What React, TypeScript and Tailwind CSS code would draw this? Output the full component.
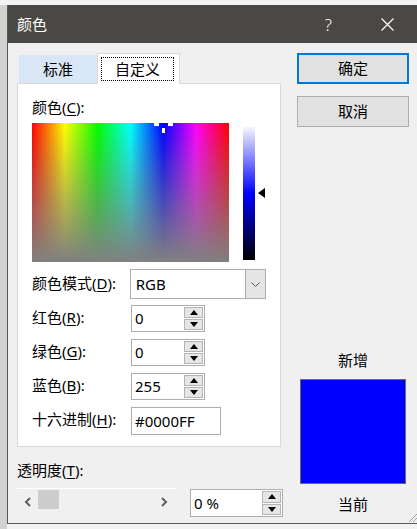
import { FC } from "react"

const SpinButtons: FC = () => (
  <div className="flex w-[20px] flex-col gap-px py-px pr-px">
    <div className="flex h-[12px] items-center justify-center border border-[#b4b4b4] bg-[#e6e6e6]">
      <svg width="8" height="5" viewBox="0 0 8 5">
        <polygon points="0,5 8,5 4,0" fill="#000" />
      </svg>
    </div>
    <div className="flex h-[12px] items-center justify-center border border-[#b4b4b4] bg-[#e6e6e6]">
      <svg width="8" height="5" viewBox="0 0 8 5">
        <polygon points="0,0 8,0 4,5" fill="#000" />
      </svg>
    </div>
  </div>
)

const SpinBox: FC<{ value: string; className: string }> = ({ value, className }) => (
  <div className={`flex border border-[#adadad] bg-white ${className}`}>
    <div className="flex grow items-center pl-[3px] text-[15px] leading-none">{value}</div>
    <SpinButtons />
  </div>
)

const Label: FC<{ text: string; hotkey: string }> = ({ text, hotkey }) => (
  <span className="text-[15px] leading-[20px]">
    {text}(<span className="underline underline-offset-2">{hotkey}</span>):
  </span>
)

export default function App() {
  return (
    <div className="h-[529px] w-[417px] overflow-hidden bg-[#f3f3f3] font-['Noto_Sans','Noto_Sans_CJK_SC',sans-serif] text-black">
      <div className="flex h-full">
        {/* desktop strip on the left */}
        <div className="mt-[5px] w-[7px] shrink-0 bg-[#d2d2d2]" />

        {/* dialog window */}
        <div className="relative mt-[5px] flex h-[519px] w-[412px] shrink-0 flex-col border-b border-l border-[#5a5a5a] bg-[#f0f0f0]">
          {/* Title bar */}
          <div className="flex h-[38px] shrink-0 items-center bg-[#4a4845] pl-[9px] text-white">
            <span className="text-[15px] leading-none">颜色</span>
            <span className="ml-auto mr-[49px] text-[17px] font-light leading-none">?</span>
            <svg width="13" height="13" viewBox="0 0 13 13" className="mr-[25px]">
              <path d="M0.5 0.5 L12.5 12.5 M12.5 0.5 L0.5 12.5" stroke="#fff" strokeWidth="1.2" />
            </svg>
          </div>

          {/* Body */}
          <div className="flex pl-[9px] pt-[10px]">
            {/* Left column */}
            <div className="flex w-[266px] flex-col">
              {/* Tabs */}
              <div className="relative z-10 -mb-px flex h-[31px] items-end pl-[2px]">
                <div className="mb-px flex h-[28px] w-[78px] items-center justify-center bg-[#d8e6f5] text-[15px]">
                  标准
                </div>
                <div className="flex h-[31px] w-[83px] border-l border-r border-t border-[#d9d9d9] bg-white pb-[3px] pl-[3px] pr-[5px] pt-[3px]">
                  <div className="flex grow items-center justify-center border border-dotted border-black text-[15px]">
                    自定义
                  </div>
                </div>
              </div>

              {/* Panel */}
              <div className="flex h-[364px] w-[264px] flex-col border border-[#d9d9d9] bg-white px-[14px] pt-[13px]">
                <Label text="颜色" hotkey="C" />

                <div className="mt-[6px] flex">
                  <div className="relative h-[139px] w-[198px] bg-[linear-gradient(to_bottom,rgba(128,128,128,0),#808080),linear-gradient(to_right,#f00,#ff0,#0f0,#0ff,#00f,#f0f,#f00)]">
                    {/* crosshair */}
                    <div className="absolute left-[122px] top-0 h-[3px] w-[5px] bg-white" />
                    <div className="absolute left-[136px] top-0 h-[3px] w-[5px] bg-white" />
                    <div className="absolute left-[130px] top-[5px] h-[5px] w-[3px] bg-white" />
                  </div>
                  <div className="ml-[14px] mt-[4px] h-[133px] w-[12px] bg-[linear-gradient(to_bottom,#f6f6ff,#0000ff,#000)]" />
                  <svg width="8" height="10" viewBox="0 0 8 10" className="ml-[3px] mt-[65px]">
                    <polygon points="0,5 7,0 7,10" fill="#000" />
                  </svg>
                </div>

                {/* Colour mode */}
                <div className="mt-[7px] flex h-[30px] items-center">
                  <div className="w-[99px] -translate-y-px">
                    <Label text="颜色模式" hotkey="D" />
                  </div>
                  <div className="flex h-[30px] w-[138px] border border-[#adadad] bg-white">
                    <div className="flex grow items-center pl-[5px] text-[15px]">RGB</div>
                    <div className="flex w-[20px] items-center justify-center border-l border-[#adadad] bg-[#e5e5e5]">
                      <svg width="9" height="5" viewBox="0 0 9 5">
                        <polyline points="0.5,0.5 4.5,4.5 8.5,0.5" fill="none" stroke="#555" strokeWidth="1" />
                      </svg>
                    </div>
                  </div>
                </div>

                {/* RGB values */}
                <div className="mt-[6px] flex h-[27px] items-center">
                  <div className="w-[99px] -translate-y-[2px]">
                    <Label text="红色" hotkey="R" />
                  </div>
                  <SpinBox value="0" className="h-[27px] w-[74px]" />
                </div>
                <div className="mt-[7px] flex h-[27px] items-center">
                  <div className="w-[99px] -translate-y-[2px]">
                    <Label text="绿色" hotkey="G" />
                  </div>
                  <SpinBox value="0" className="h-[27px] w-[74px]" />
                </div>
                <div className="mt-[7px] flex h-[27px] items-center">
                  <div className="w-[99px] -translate-y-[2px]">
                    <Label text="蓝色" hotkey="B" />
                  </div>
                  <SpinBox value="255" className="h-[27px] w-[74px]" />
                </div>
                <div className="mt-[7px] flex h-[28px] items-center">
                  <div className="w-[99px] -translate-y-[2px]">
                    <Label text="十六进制" hotkey="H" />
                  </div>
                  <div className="flex h-[28px] w-[90px] items-center border border-[#adadad] bg-white pl-[3px] text-[15px]">
                    #0000FF
                  </div>
                </div>
              </div>

              {/* Transparency */}
              <div className="mt-[11px]">
                <Label text="透明度" hotkey="T" />
              </div>
              <div className="mt-[6px] flex">
                <div className="flex h-[22px] w-[159px] items-start border-t border-white">
                  <svg width="8" height="10" viewBox="0 0 8 10" className="ml-[7px] mt-[8px]">
                    <polyline points="6,1 2,5 6,9" fill="none" stroke="#606060" strokeWidth="2" />
                  </svg>
                  <div className="ml-[6px] mt-px h-[19px] w-[21px] bg-[#cdcdcd]" />
                  <svg width="8" height="10" viewBox="0 0 8 10" className="ml-auto mr-[8px] mt-[8px]">
                    <polyline points="2,1 6,5 2,9" fill="none" stroke="#606060" strokeWidth="2" />
                  </svg>
                </div>
                <SpinBox value="0 %" className="ml-[14px] mt-px h-[28px] w-[93px]" />
              </div>
            </div>

            {/* Right column */}
            <div className="ml-[14px] flex w-[112px] flex-col">
              <div className="flex h-[31px] items-center justify-center border-2 border-[#0078d7] bg-[#e1e1e1] text-[15px]">
                确定
              </div>
              <div className="mt-[12px] flex h-[31px] items-center justify-center border border-[#adadad] bg-[#e1e1e1] text-[15px]">
                取消
              </div>
              <div className="mt-[223px] text-center text-[15px] leading-[20px]">新增</div>
              <div className="ml-[3px] mt-[9px] h-[105px] w-[106px] border border-[#6b6b6b] bg-[#0000ff]" />
              <div className="mt-[10px] text-center text-[15px] leading-[20px]">当前</div>
            </div>
          </div>

          {/* resize grip */}
          <svg width="10" height="10" viewBox="0 0 10 10" className="absolute bottom-px right-[2px]">
            <path d="M10 2 L2 10 M10 6 L6 10" stroke="#a0a0a0" strokeWidth="1" />
          </svg>
        </div>
      </div>
    </div>
  )
}
